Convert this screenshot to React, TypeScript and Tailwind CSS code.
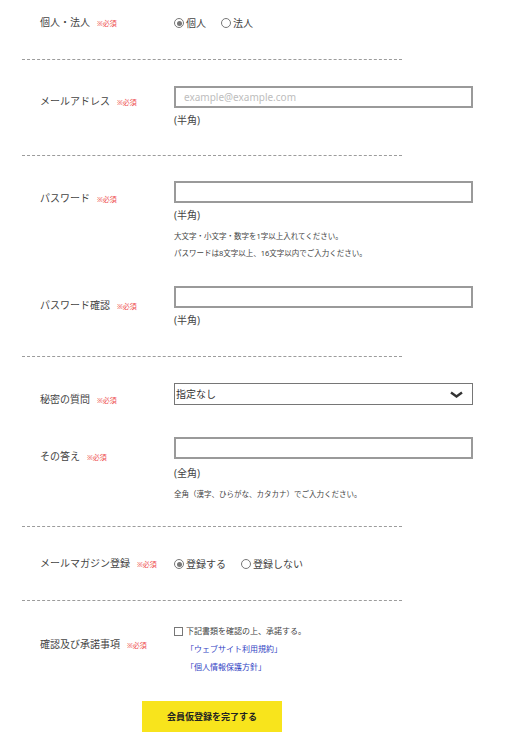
import type { ReactNode } from "react";

const FONT = { fontFamily: '"Noto Sans", "Noto Sans CJK JP", sans-serif' };

function Req() {
  return <span className="ml-[7px] text-[7px] text-[#ee4b4b]">※必須</span>;
}

function Sep() {
  return <div className="ml-[22px] w-[380px] border-t border-dashed border-[#9c9c9c]" />;
}

function Label({ text, pt }: { text: string; pt?: string }) {
  return (
    <div className={`w-[174px] shrink-0 whitespace-nowrap pl-[40px] ${pt ?? ""} text-[10px] leading-[16px] text-[#444]`}>
      {text}
      <Req />
    </div>
  );
}

function Row({
  label,
  pt,
  className,
  children,
}: {
  label: string;
  pt: string;
  className?: string;
  children: ReactNode;
}) {
  return (
    <div className={`flex ${className ?? ""}`}>
      <Label text={label} pt={pt} />
      <div className="w-[299px]">{children}</div>
    </div>
  );
}

function TextBox({ placeholder }: { placeholder?: string }) {
  return (
    <div className="flex h-[22px] w-[299px] items-center border-2 border-[#9a9a9a] bg-white pl-[8px] text-[10px] text-[#bdbdbd]">
      {placeholder}
    </div>
  );
}

function Note({ children, mt = "mt-[4px]" }: { children: ReactNode; mt?: string }) {
  return <div className={`${mt} text-[10px] leading-[16px] text-[#444]`}>{children}</div>;
}

function Radio({ label, checked }: { label: string; checked?: boolean }) {
  return (
    <span className="flex items-center text-[10px] text-[#444]">
      <span className="flex h-[10px] w-[10px] items-center justify-center rounded-full border border-[#777] bg-white">
        {checked && <span className="h-[5px] w-[5px] rounded-full bg-[#777]" />}
      </span>
      <span className="ml-[2px]">{label}</span>
    </span>
  );
}

export default function App() {
  return (
    <div className="w-[517px] bg-white pb-[15px]" style={FONT}>
      <div className="mt-[13px] flex h-[20px] items-center">
        <Label text="個人・法人" />
        <div className="flex gap-[15px]">
          <Radio label="個人" checked />
          <Radio label="法人" />
        </div>
      </div>

      <div className="mt-[26px]">
        <Sep />
      </div>

      <Row label="メールアドレス" pt="pt-[7px]" className="mt-[26px]">
        <TextBox placeholder="example@example.com" />
        <Note>(半角)</Note>
      </Row>

      <div className="mt-[27px]">
        <Sep />
      </div>

      <Row label="パスワード" pt="pt-[9px]" className="mt-[25px]">
        <TextBox />
        <Note>(半角)</Note>
        <div className="mt-[5px] text-[7.5px] leading-[17px] text-[#444]">
          <p>大文字・小文字・数字を1字以上入れてください。</p>
          <p>パスワードは8文字以上、16文字以内でご入力ください。</p>
        </div>
      </Row>

      <Row label="パスワード確認" pt="pt-[11px]" className="mt-[24px]">
        <TextBox />
        <Note>(半角)</Note>
      </Row>

      <div className="mt-[28px]">
        <Sep />
      </div>

      <Row label="秘密の質問" pt="pt-[8px]" className="mt-[26px]">
        <div className="flex h-[22px] w-[299px] items-center justify-between border border-[#767676] bg-white pl-[1px] pr-[9px] text-[10px] text-[#333]">
          <span>指定なし</span>
          <svg width="13" height="7" viewBox="0 0 13 7">
            <polyline points="1,1.5 6.5,5.5 12,1.5" fill="none" stroke="#333" strokeWidth="2.4" />
          </svg>
        </div>
      </Row>

      <Row label="その答え" pt="pt-[11px]" className="mt-[28px]">
        <TextBox />
        <Note mt="mt-[6px]">(全角)</Note>
        <div className="mt-[5px] text-[7.5px] leading-[17px] text-[#444]">
          <p>全角（漢字、ひらがな、カタカナ）でご入力ください。</p>
        </div>
      </Row>

      <div className="mt-[23px]">
        <Sep />
      </div>

      <div className="mt-[27px] flex h-[20px] items-center">
        <Label text="メールマガジン登録" />
        <div className="flex gap-[15px]">
          <Radio label="登録する" checked />
          <Radio label="登録しない" />
        </div>
      </div>

      <div className="mt-[26px]">
        <Sep />
      </div>

      <Row label="確認及び承諾事項" pt="pt-[14px]" className="mt-[21px]">
        <div className="text-[8px] leading-[18px]">
          <div className="flex items-center text-[#444]">
            <span className="h-[9px] w-[9px] border border-[#777] bg-white" />
            <span className="ml-[3px]">下記書類を確認の上、承諾する。</span>
          </div>
          <div className="pl-[12px] text-[#3343c4]">「ウェブサイト利用規約」</div>
          <div className="pl-[12px] text-[#3343c4]">「個人情報保護方針」</div>
        </div>
      </Row>

      <div className="ml-[142px] mt-[25px] flex h-[31px] w-[140px] items-center justify-center bg-[#f8e41c] text-[9px] font-bold text-[#222]">
        会員仮登録を完了する
      </div>
    </div>
  );
}
